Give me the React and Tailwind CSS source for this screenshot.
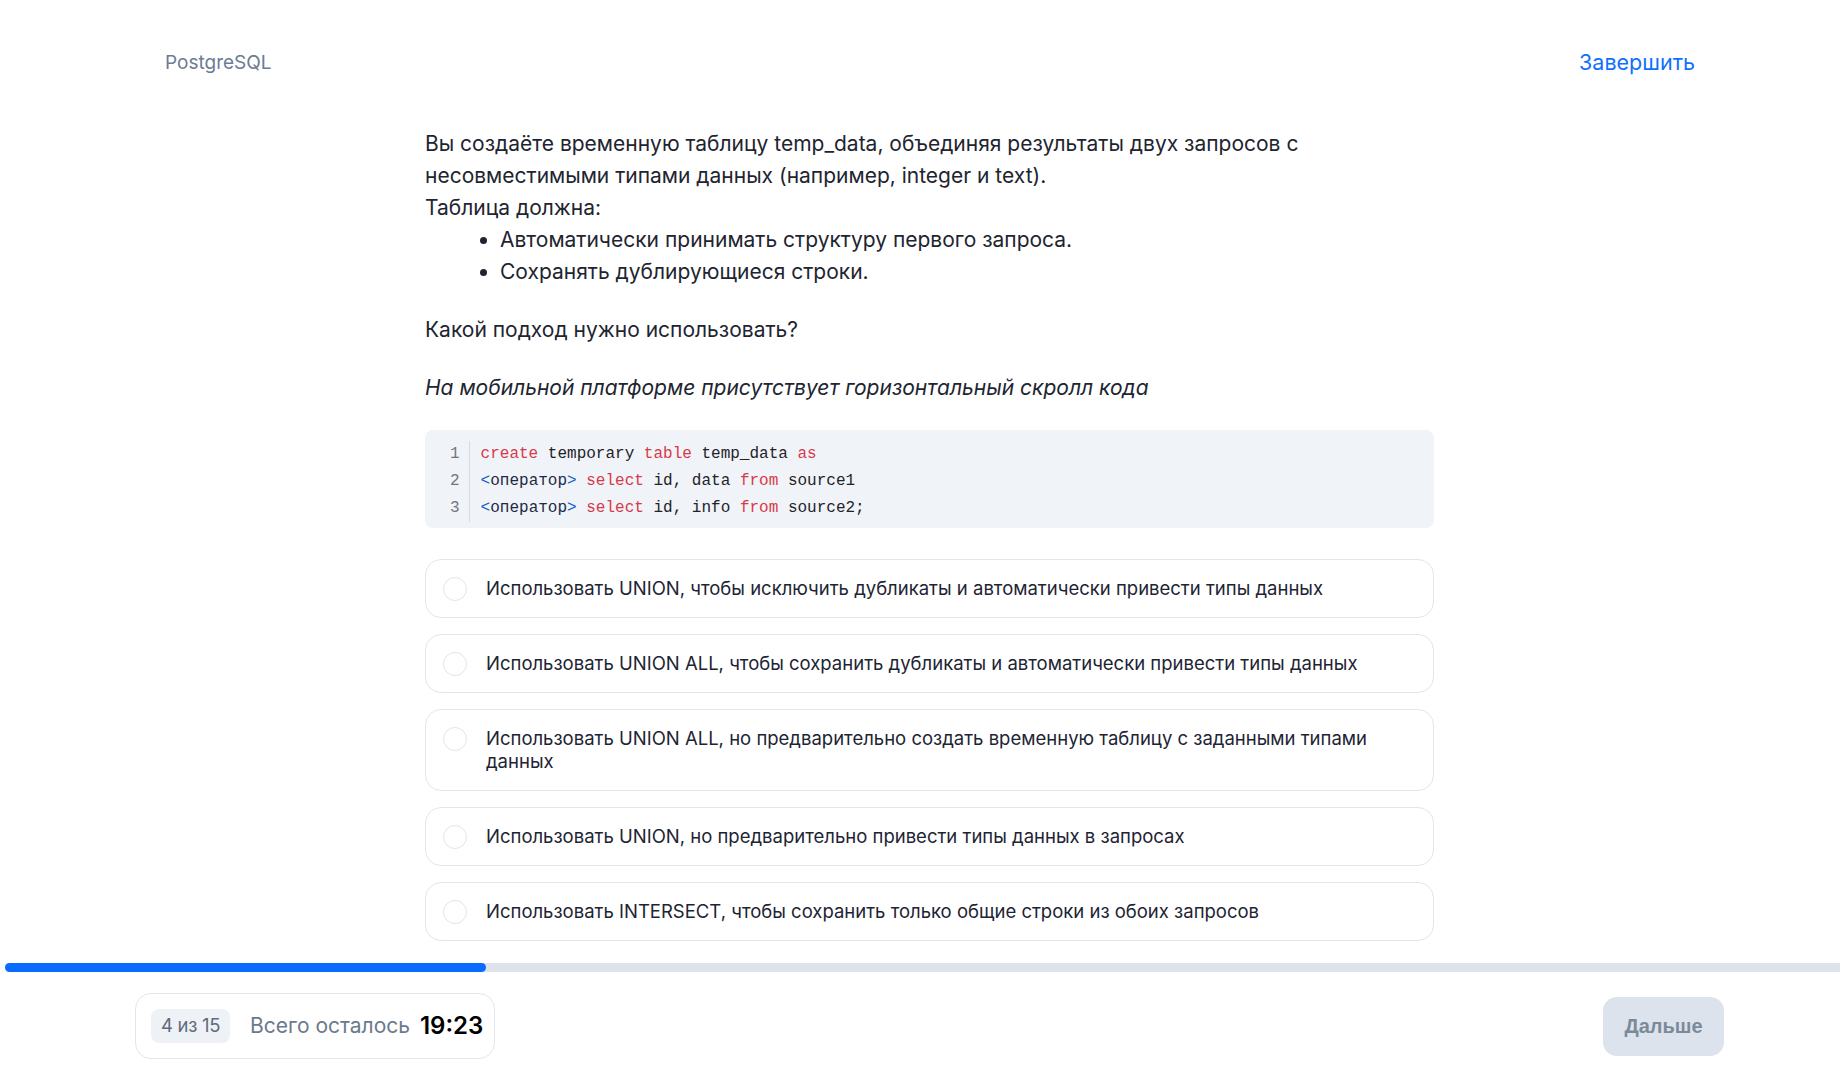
import React, { useState } from 'react';

const options = [
  'Использовать UNION, чтобы исключить дубликаты и автоматически привести типы данных',
  'Использовать UNION ALL, чтобы сохранить дубликаты и автоматически привести типы данных',
  'Использовать UNION ALL, но предварительно создать временную таблицу с заданными типами данных',
  'Использовать UNION, но предварительно привести типы данных в запросах',
  'Использовать INTERSECT, чтобы сохранить только общие строки из обоих запросов',
];

const Kw = ({ children }) => <span className="text-[#d73a49]">{children}</span>;

const Op = () => (
  <>
    <span className="text-[#0a5dc2]">&lt;</span>
    <span className="text-[#1f2a44]">оператор</span>
    <span className="text-[#0a5dc2]">&gt;</span>
  </>
);

const CodeBlock = () => {
  const lines = [
    <>
      <Kw>create</Kw> temporary <Kw>table</Kw> temp_data <Kw>as</Kw>
    </>,
    <>
      <Op /> <Kw>select</Kw> id, data <Kw>from</Kw> source1
    </>,
    <>
      <Op /> <Kw>select</Kw> id, info <Kw>from</Kw> source2;
    </>,
  ];
  return (
    <div className="mt-[26px] bg-[#f0f3f8] rounded-lg pt-[11px] pb-[6px] pl-[25px] flex font-['Liberation_Mono',monospace] text-[16px] leading-[27px]">
      <div className="flex flex-col items-end pr-[9px] border-r border-[#d5dbe3] text-[#6e7781]">
        {lines.map((_, i) => (
          <span key={i}>{i + 1}</span>
        ))}
      </div>
      <div className="flex flex-col pl-[11px] text-[#1f2328] whitespace-pre">
        {lines.map((l, i) => (
          <span key={i}>{l}</span>
        ))}
      </div>
    </div>
  );
};

const Option = ({ text, selected, onClick }) => (
  <button
    onClick={onClick}
    className="w-full text-left flex items-start gap-[19px] border border-[#e1e6ee] rounded-2xl pl-[17px] pr-6 py-[17px] bg-white"
  >
    <span
      className={`shrink-0 w-6 h-6 -my-[0.5px] rounded-full ${
        selected ? 'border-[6px] border-[#0a6cff]' : 'border-[1.5px] border-[#dfe5ec]'
      }`}
    />
    <span className="text-[18.5px] leading-[23px] text-[#1d2433]">{text}</span>
  </button>
);

const App = () => {
  const [selected, setSelected] = useState(null);

  return (
    <div className="min-h-screen bg-white font-['Inter','Noto_Sans',sans-serif]">
      {/* Header */}
      <header className="flex justify-between items-center pl-[165px] pr-[145px] pt-[49px] h-[77px]">
        <div className="text-[19px] text-[#6b7c93]">PostgreSQL</div>
        <a href="#" className="text-[21.5px] text-[#0f6fff] -mt-[1px]">
          Завершить
        </a>
      </header>

      {/* Question */}
      <main className="ml-[425px] w-[1009px] mt-[51px]">
        <div className="text-[21px] leading-8 text-[#1e2530]">
          <p>
            Вы создаёте временную таблицу temp_data, объединяя результаты двух запросов с
            <br />
            несовместимыми типами данных (например, integer и text).
          </p>
          <p>Таблица должна:</p>
          <ul className="list-disc pl-[75px]">
            <li>Автоматически принимать структуру первого запроса.</li>
            <li>Сохранять дублирующиеся строки.</li>
          </ul>
          <p className="mt-[26px]">Какой подход нужно использовать?</p>
          <p className="mt-[26px] italic">На мобильной платформе присутствует горизонтальный скролл кода</p>
        </div>

        <CodeBlock />

        <div className="mt-[31px] flex flex-col gap-4">
          {options.map((o, i) => (
            <Option key={i} text={o} selected={selected === i} onClick={() => setSelected(i)} />
          ))}
        </div>
      </main>

      {/* Progress */}
      <div className="mt-[22px] ml-[5px] h-[9px] bg-[#dce3ea] rounded-l-full flex">
        <div className="w-[481px] h-full bg-[#0a6cff] rounded-full" />
      </div>

      {/* Footer */}
      <footer className="mt-[21px] flex justify-between items-center pl-[135px] pr-[116px]">
        <div className="w-[360px] h-[66px] border border-[#e1e6ee] rounded-2xl flex items-center pl-[15px] gap-[20px]">
          <span className="bg-[#eef2f7] rounded-lg px-[10px] h-[34px] flex items-center text-[18.5px] text-[#5f6b7a] tracking-[-0.3px]">
            4 из 15
          </span>
          <span className="flex items-center gap-[10px]">
            <span className="text-[21px] text-[#6b7a8c]">Всего осталось</span>
            <span className="text-[24px] font-semibold text-black">19:23</span>
          </span>
        </div>
        <button className="w-[121px] h-[59px] rounded-[14px] bg-[#dce3ec] text-[20px] font-bold text-[#7b8a9b] font-['Liberation_Sans',sans-serif]">
          Дальше
        </button>
      </footer>
    </div>
  );
};

export default App;
